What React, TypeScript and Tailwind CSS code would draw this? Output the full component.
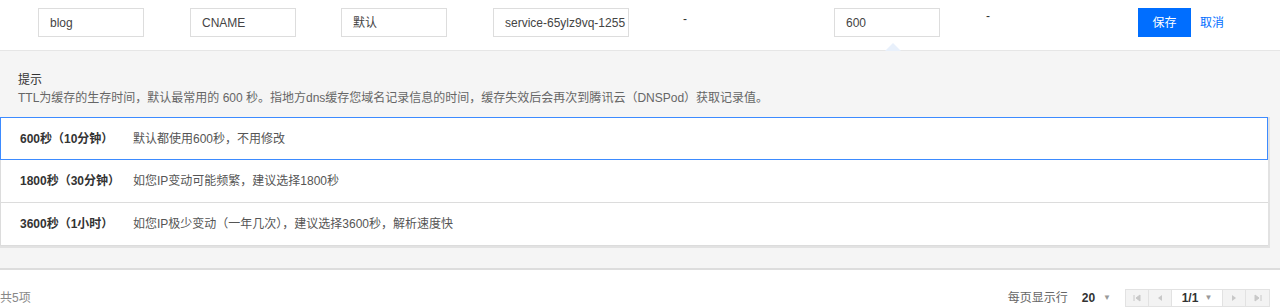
import React from 'react';

const font = { fontFamily: '"Liberation Sans", "Noto Sans CJK SC", sans-serif' };

const options = [
  { label: '600秒（10分钟）', desc: '默认都使用600秒，不用修改', active: true },
  { label: '1800秒（30分钟）', desc: '如您IP变动可能频繁，建议选择1800秒', active: false },
  { label: '3600秒（1小时）', desc: '如您IP极少变动（一年几次），建议选择3600秒，解析速度快', active: false },
];

function Field({ value, w }: { value: string; w: string }) {
  return (
    <div className={`${w} h-[29px] border border-[#dddddd] bg-white px-[11px] flex items-center text-[12px] text-[#444] overflow-hidden whitespace-nowrap`}>
      {value}
    </div>
  );
}

function PageBtn({ children }: { children: React.ReactNode }) {
  return (
    <div className="w-[23px] h-full bg-[#f3f3f3] border-r border-[#e2e2e2] flex items-center justify-center text-[#c8c8c8]">
      {children}
    </div>
  );
}

export default function App() {
  return (
    <div className="w-[1280px] h-[307px] bg-white overflow-hidden" style={font}>
      {/* Edit row */}
      <div className="relative h-[50px] flex pl-[38px] pt-[8px]">
        <Field value="blog" w="w-[106px]" />
        <div className="ml-[46px]"><Field value="CNAME" w="w-[106px]" /></div>
        <div className="ml-[45px]"><Field value="默认" w="w-[106px]" /></div>
        <div className="ml-[46px]"><Field value="service-65ylz9vq-1255" w="w-[136px]" /></div>
        <div className="ml-[54px] text-[12px] text-[#333] leading-[12px] pt-[5px]">-</div>
        <div className="ml-[147px]"><Field value="600" w="w-[106px]" /></div>
        <div className="ml-[46px] text-[12px] text-[#333] leading-[12px] pt-[2px]">-</div>
        <button className="ml-[148px] w-[53px] h-[29px] bg-[#006eff] text-white text-[12px]">保存</button>
        <span className="ml-[9px] h-[29px] flex items-center text-[12px] text-[#006eff]">取消</span>
        <svg className="absolute left-[885px] top-[42px]" width="16" height="9" viewBox="0 0 16 9">
          <path d="M0 9 L8 1 L16 9 Z" fill="#e8f0fb" />
        </svg>
      </div>

      {/* TTL tips panel */}
      <div className="bg-[#f5f5f5] border-t border-[#e6e6e6] border-b-2 border-b-[#dddddd] pt-[20px] pb-[20px] pr-[10px]">
        <div className="pl-[18px] text-[12px] leading-[18px] text-[#333]">提示</div>
        <div className="pl-[18px] text-[12px] leading-[18px] text-[#666]">
          TTL为缓存的生存时间，默认最常用的 600 秒。指地方dns缓存您域名记录信息的时间，缓存失效后会再次到腾讯云（DNSPod）获取记录值。
        </div>
        <div className="mt-[10px] bg-white border-r-2 border-b-2 border-[#e2e2e2]">
          {options.map((o) => (
            <div
              key={o.label}
              className={`h-[43px] flex items-center text-[12px] ${
                o.active ? 'border border-[#3d8bff]' : 'border-x border-b border-[#dcdcdc] border-r-0'
              }`}
            >
              <div className="w-[132px] pl-[19px] font-bold text-[#333] whitespace-nowrap">{o.label}</div>
              <div className="text-[#555]">{o.desc}</div>
            </div>
          ))}
        </div>
      </div>

      {/* Footer */}
      <div className="flex items-center justify-between pt-[18px] pr-[10px] h-[37px] text-[12px]">
        <span className="text-[#888] leading-[18px]">共5项</span>
        <div className="flex items-center h-[18px]">
          <span className="text-[#666]">每页显示行</span>
          <span className="ml-[14px] font-bold text-[#333]">20</span>
          <span className="ml-[8px] text-[8px] text-[#999]">▼</span>
          <div className="ml-[14px] flex h-[18px] border border-[#e2e2e2]">
            <PageBtn>
              <svg width="8" height="8" viewBox="0 0 8 8"><path d="M1 1v6M7 1L3 4l4 3z" stroke="#c8c8c8" fill="#c8c8c8" /></svg>
            </PageBtn>
            <PageBtn>
              <svg width="6" height="8" viewBox="0 0 6 8"><path d="M5 1L1 4l4 3z" fill="#c8c8c8" /></svg>
            </PageBtn>
            <div className="w-[51px] h-full bg-white border-r border-[#e2e2e2] flex items-center justify-center gap-[6px]">
              <span className="font-bold text-[#333]">1/1</span>
              <span className="text-[8px] text-[#999]">▼</span>
            </div>
            <PageBtn>
              <svg width="6" height="8" viewBox="0 0 6 8"><path d="M1 1l4 3-4 3z" fill="#c8c8c8" /></svg>
            </PageBtn>
            <div className="w-[23px] h-full bg-[#f3f3f3] flex items-center justify-center">
              <svg width="8" height="8" viewBox="0 0 8 8"><path d="M7 1v6M1 1l4 3-4 3z" stroke="#c8c8c8" fill="#c8c8c8" /></svg>
            </div>
          </div>
        </div>
      </div>
    </div>
  );
}
